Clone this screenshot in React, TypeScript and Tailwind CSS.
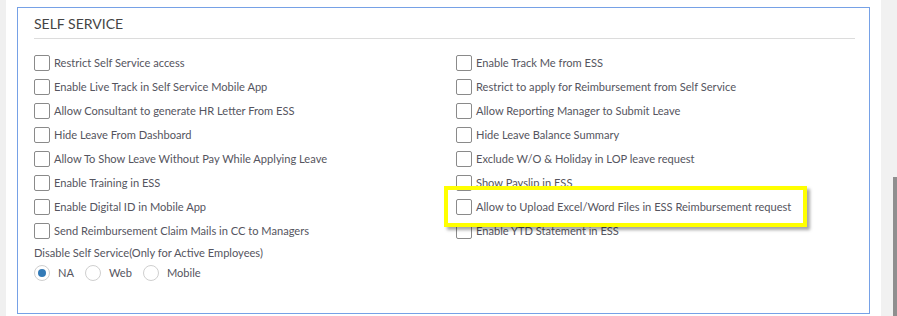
const leftItems = [
  "Restrict Self Service access",
  "Enable Live Track in Self Service Mobile App",
  "Allow Consultant to generate HR Letter From ESS",
  "Hide Leave From Dashboard",
  "Allow To Show Leave Without Pay While Applying Leave",
  "Enable Training in ESS",
  "Enable Digital ID in Mobile App",
  "Send Reimbursement Claim Mails in CC to Managers",
];

const rightItems = [
  "Enable Track Me from ESS",
  "Restrict to apply for Reimbursement from Self Service",
  "Allow Reporting Manager to Submit Leave",
  "Hide Leave Balance Summary",
  "Exclude W/O & Holiday in LOP leave request",
  "Show Payslip in ESS",
  "Allow to Upload Excel/Word Files in ESS Reimbursement request",
  "Enable YTD Statement in ESS",
];

function CheckRow({ label, highlight }: { label: string; highlight?: boolean }) {
  return (
    <div className="relative flex h-6 items-center gap-1">
      <span className="h-4 w-4 shrink-0 rounded-[2px] border border-[#8a8a8a] bg-white" />
      <span className="whitespace-nowrap">{label}</span>
      {highlight ? (
        <div className="pointer-events-none absolute -bottom-[8px] -left-[12px] -top-[9px] z-10 w-[363px] border-4 border-[#ffff00] shadow-[3px_3px_3px_rgba(0,0,0,0.35)]" />
      ) : null}
    </div>
  );
}

function Radio({ label, checked }: { label: string; checked?: boolean }) {
  return (
    <div className="flex items-center gap-2">
      <span className="flex h-4 w-4 items-center justify-center rounded-full border border-[#cfcfcf] bg-white">
        {checked ? <span className="h-2 w-2 rounded-full bg-[#337ab7]" /> : null}
      </span>
      <span>{label}</span>
    </div>
  );
}

export default function App() {
  return (
    <div className="flex h-[316px] w-[897px] overflow-hidden bg-[#f0f0f0] font-['Lato',sans-serif] text-[11.1px] text-[#555560]">
      <div className="ml-[6px] flex-1 bg-white pl-[11px] pt-[7px]">
        <div className="h-[307px] w-[853px] border border-[#76a1e6] px-4 pt-[3px]">
          <h2 className="h-[27px] text-[14px] leading-[26px] text-[#444]">SELF SERVICE</h2>
          <div className="-mr-[2px] border-b border-[#dcdcdc]" />
          <div className="mt-[12px] grid grid-cols-[422px_1fr]">
            <div className="flex flex-col">
              {leftItems.map((t) => (
                <CheckRow key={t} label={t} />
              ))}
            </div>
            <div className="flex flex-col">
              {rightItems.map((t, i) => (
                <CheckRow key={t} label={t} highlight={i === 6} />
              ))}
            </div>
          </div>
          <div className="leading-[20px]">Disable Self Service(Only for Active Employees)</div>
          <div className="flex h-5 items-center gap-[11px]">
            <Radio label="NA" checked />
            <Radio label="Web" />
            <Radio label="Mobile" />
          </div>
        </div>
      </div>
      <div className="relative w-[16px] bg-[#f1f1f1]">
        <div className="absolute left-[12px] top-[177px] h-[139px] w-[4px] bg-[#8f8f8f]" />
      </div>
    </div>
  );
}
